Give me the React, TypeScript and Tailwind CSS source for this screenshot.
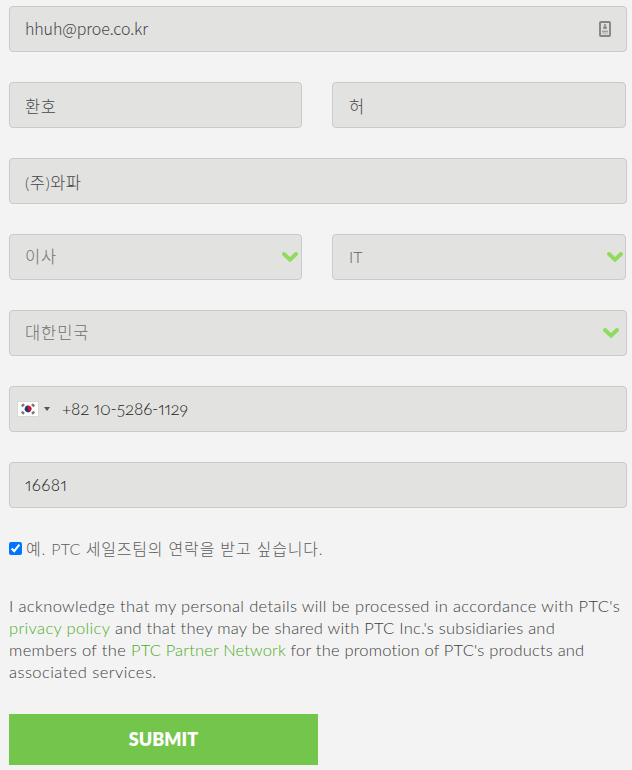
import React, { useState } from 'react';
import clsx from 'clsx';

const PARAGRAPH_LINE = 'block whitespace-nowrap';

function Field({ children, className }: { children: React.ReactNode; className?: string }) {
  return (
    <div
      className={clsx(
        'flex h-[46px] items-center rounded-[4px] border border-[#cacaca] bg-[#e2e2e0] pl-[15px] text-[16px] leading-[22px] whitespace-nowrap',
        className
      )}
    >
      {children}
    </div>
  );
}

function Chevron() {
  return (
    <svg width="16" height="10" viewBox="0 0 16 10" className="ml-auto shrink-0" fill="none">
      <path d="M2 2 L8 7.7 L14 2" stroke="#8fdc5d" strokeWidth="3.9" strokeLinecap="round" strokeLinejoin="miter" />
    </svg>
  );
}

function ContactIcon() {
  return (
    <svg width="12" height="16" viewBox="0 0 12 16" className="ml-auto shrink-0">
      <rect x="1" y="1" width="10" height="14" rx="0.8" fill="#dededd" stroke="#858585" strokeWidth="1.9" />
      <rect x="5.2" y="3" width="1.6" height="2.5" fill="#858585" />
      <path d="M4.2 5.5h3.6v2.4H4.2z" fill="#858585" />
      <path d="M3 9.6h6v1.8H3z" fill="#a0a0a0" />
      <path d="M3.3 12.2h5.4v1H3.3z" fill="#bdbdbd" />
    </svg>
  );
}

function KoreaFlag() {
  return (
    <svg width="20" height="14" viewBox="0 0 20 14" className="shrink-0 shadow-[0_0_1px_#aaa]">
      <rect width="20" height="14" fill="#fff" />
      <g transform="rotate(25 10 7)">
        <circle cx="10" cy="7" r="3.3" fill="#123a80" />
        <path d="M6.7 7a3.3 3.3 0 0 1 6.6 0a1.65 1.65 0 0 1-3.3 0a1.65 1.65 0 0 0-3.3 0z" fill="#d2122e" />
      </g>
      <g stroke="#777" strokeWidth="2.4">
        <path d="M3.8 4.3l2.2-2.2M14 2.1l2.2 2.2M3.8 9.7L6 11.9M14 11.9l2.2-2.2" />
      </g>
    </svg>
  );
}

export default function App() {
  const [contact, setContact] = useState(true);

  return (
    <form
      className="min-h-[770px] w-[632px] bg-[#f3f3f3] pt-[6px] pl-[9px] font-['Lato','Noto_Sans_CJK_KR',sans-serif] text-[#484848]"
      onSubmit={(e) => e.preventDefault()}
    >
      <div className="flex w-[618px] flex-col gap-[30px]">
        <Field className="pr-[15px]">
          <span className="-mt-[2px] font-['Noto_Sans_CJK_KR',sans-serif] font-light tracking-[-0.1px]">hhuh@proe.co.kr</span>
          <ContactIcon />
        </Field>

        <div className="flex gap-[30px]">
          <Field className="w-[293px] pt-[3px] !text-[16.5px] font-light tracking-[0.6px]">환호</Field>
          <Field className="w-[294px] pt-[3px] !pl-[16px] !text-[16.5px] font-light">허</Field>
        </div>

        <Field className="pt-[3px] !text-[16.5px] font-light tracking-[0.5px]">(주)와파</Field>

        <div className="flex gap-[30px]">
          <Field className="w-[293px] pr-[3px] font-light text-[#707070]">
            <span className="text-[16.5px] tracking-[0.9px]">이사</span>
            <Chevron />
          </Field>
          <Field className="w-[294px] pr-[2px] font-light text-[#606060]">
            <span className="-mt-[1px] ml-[1px]">IT</span>
            <Chevron />
          </Field>
        </div>

        <Field className="pr-[7px] font-light text-[#707070]">
          <span className="text-[16.5px] tracking-[0.9px]">대한민국</span>
          <Chevron />
        </Field>

        <Field className="!pl-[8px]">
          <KoreaFlag />
          <span className="ml-[6px] h-0 w-0 border-x-[3px] border-t-[4px] border-x-transparent border-t-[#555]" />
          <span className="ml-[12px] text-[17px] font-light tracking-[-0.15px] text-[#222] [font-variant-numeric:oldstyle-nums_proportional-nums]">+82 10-5286-1129</span>
        </Field>

        <Field className="!text-[17px] font-light tracking-[0.4px] text-[#222] [font-variant-numeric:oldstyle-nums_proportional-nums]">16681</Field>
      </div>

      <label className="mt-[30px] flex h-[22px] items-center text-[16px] leading-[22px] font-light whitespace-nowrap text-[#5c5c5c]">
        <input
          type="checkbox"
          checked={contact}
          onChange={(e) => setContact(e.target.checked)}
          className="relative top-[-1px] mr-[4px] h-[13px] w-[13px] shrink-0"
        />
        <span className="tracking-[0.82px]">
          예. <span className="tracking-[0.2px]">PTC</span> 세일즈팀의 연락을 받고 싶습니다.
        </span>
      </label>

      <p className="mt-[35px] text-[16.5px] leading-[22px] font-light text-[#404040]">
        <span className={PARAGRAPH_LINE}>
          <span className="tracking-[0.36px]">I acknowledge that my personal details will be processed in accordance with PTC's</span>
        </span>
        <span className={PARAGRAPH_LINE}>
          <a href="#" className="tracking-[0.34px] text-[#4cae1c]">privacy policy</a>
          <span className="tracking-[0.24px]"> and that they may be shared with PTC Inc.'s subsidiaries and</span>
        </span>
        <span className={PARAGRAPH_LINE}>
          <span className="tracking-[0.35px]">members of the </span>
          <a href="#" className="tracking-[0.14px] text-[#4cae1c]">PTC Partner Network</a>
          <span className="tracking-[0.19px]"> for the promotion of PTC's products and</span>
        </span>
        <span className={clsx(PARAGRAPH_LINE, 'tracking-[0.44px]')}>associated services.</span>
      </p>

      <button type="submit" className="mt-[31px] flex h-[51px] w-[309px] items-center justify-center bg-[#74c54b] text-[18px] font-extrabold text-white">
        SUBMIT
      </button>
    </form>
  );
}
